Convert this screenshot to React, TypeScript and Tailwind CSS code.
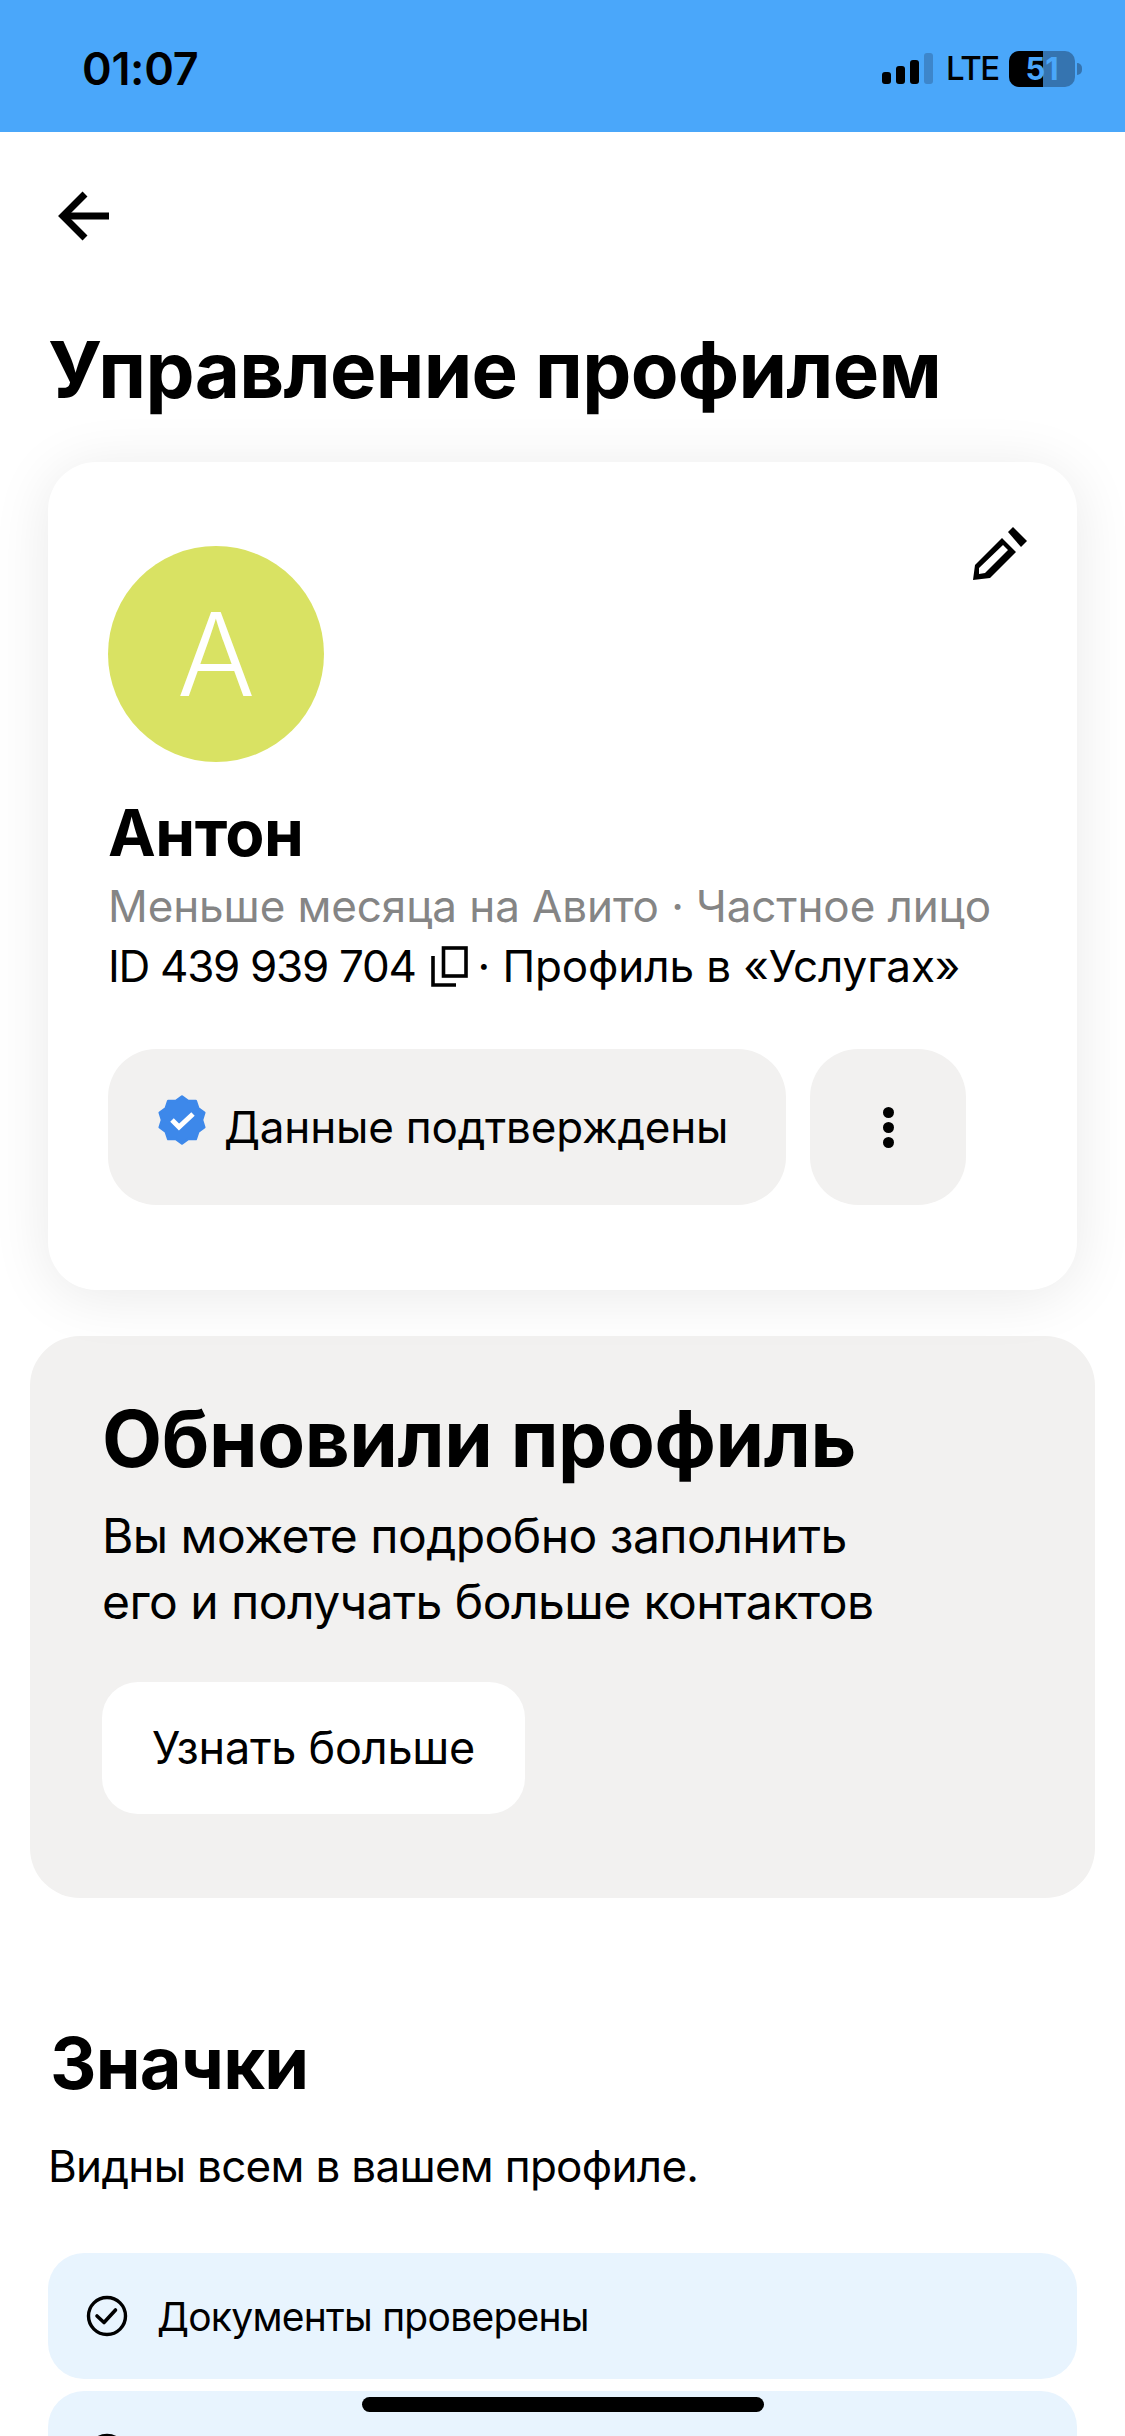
const Badge = ({ label }: { label?: string }) => (
  <div className="flex h-[126px] shrink-0 items-center rounded-[36px] bg-[#e8f4fe] pl-[38px]">
    <svg width="42" height="42" viewBox="0 0 42 42" fill="none" className="mr-[29px]">
      <circle cx="21" cy="21" r="18.5" stroke="black" strokeWidth="3.4" />
      <path d="M11 21 L18 27.5 L29.5 15" stroke="black" strokeWidth="3.6" strokeLinecap="round" strokeLinejoin="round" fill="none" />
    </svg>
    {label && <span className="text-[39px] leading-none tracking-[-0.75px]">{label}</span>}
  </div>
);

const StatusBar = () => (
  <div className="flex h-[132px] shrink-0 items-center justify-between bg-[#4aa7fa] pl-[82px] pr-[43px] pt-[5px]">
    <span className="text-[45px] font-semibold leading-none tracking-[-0.3px]">01:07</span>
    <div className="flex items-center">
      <div className="flex items-end gap-[5px]">
        <div className="h-[12px] w-[9px] rounded-[3px] bg-black" />
        <div className="h-[18px] w-[9px] rounded-[3px] bg-black" />
        <div className="h-[24px] w-[9px] rounded-[3px] bg-black" />
        <div className="h-[31px] w-[9px] rounded-[3px] bg-[#3d86cb]" />
      </div>
      <span className="ml-[13px] w-[50px] text-[33px] font-medium leading-none tracking-[-1.4px]">LTE</span>
      <div className="relative ml-[13px] flex h-[36px] w-[66px] items-center justify-center overflow-hidden rounded-[10px] bg-[#3574b0]">
        <div className="absolute inset-y-0 left-0 w-[34px] bg-black" />
        <span className="relative text-[31px] font-bold leading-none text-[#4aa7fa]">51</span>
      </div>
      <div className="ml-[2px] h-[12px] w-[5px] rounded-r-full bg-[#3574b0]" />
    </div>
  </div>
);

// 10-point rosette behind the check mark
const rosette = Array.from({ length: 20 }, (_, i) => {
  const r = i % 2 === 0 ? 23.5 : 20;
  const a = (i * 18 - 90) * (Math.PI / 180);
  return `${(26 + r * Math.cos(a)).toFixed(1)},${(26 + r * Math.sin(a)).toFixed(1)}`;
}).join(" ");

export default function App() {
  return (
    <div className="relative flex h-[2436px] w-[1125px] flex-col overflow-hidden bg-white font-['Inter',sans-serif] text-black">
      <StatusBar />
      <div className="shrink-0 pl-[55px] pt-[56px]">
        <svg width="58" height="56" viewBox="0 0 58 56" fill="none">
          <path d="M54 28 H8" stroke="black" strokeWidth="7" />
          <path d="M30 6 L8 28 L30 50" stroke="black" strokeWidth="7" />
        </svg>
      </div>

      <h1 className="mt-[81px] shrink-0 pl-[48px] text-[78px] font-bold leading-[90px] tracking-[-0.7px]">
        Управление профилем
      </h1>

      <section className="relative mx-[48px] mt-[47px] h-[828px] shrink-0 rounded-[48px] bg-white pl-[60px] pt-[84px] shadow-[0_6px_60px_rgba(0,0,0,0.09)]">
        <svg width="64" height="64" viewBox="0 0 64 64" fill="none" className="absolute right-[48px] top-[58px]">
          <path
            d="M10 45 L37 18 L51 32 L25 58 L8 60 Z M14 48 L14 54 L20 53 L43 30 L38 25 Z"
            fill="black"
            fillRule="evenodd"
          />
          <path d="M43 12 L48 7 L62 21 L56 27 Z" fill="black" />
        </svg>
        <div className="flex h-[216px] w-[216px] items-center justify-center rounded-full bg-[#d9e263] text-[116px] font-[350] leading-none text-white">
          А
        </div>
        <div className="mt-[35px] text-[64px] font-bold leading-[72px] tracking-[-0.5px]">Антон</div>
        <div className="mt-[7px] text-[44px] leading-[60px] tracking-[-0.1px] text-[#858585]">
          Меньше месяца на Авито · Частное лицо
        </div>
        <div className="flex items-center text-[44px] leading-[61px] tracking-[-0.1px]">
          <span className="tracking-[-1.3px]">ID 439 939 704</span>
          <svg width="38" height="42" viewBox="0 0 38 42" fill="none" className="ml-[14px] mr-[10px]">
            <rect x="13.5" y="2" width="22.5" height="28" stroke="black" strokeWidth="3.6" />
            <path d="M3 10 V39 H26" stroke="black" strokeWidth="3.6" />
          </svg>
          <span>· Профиль в «Услугах»</span>
        </div>
        <div className="mt-[52px] flex gap-[24px]">
          <div className="flex h-[156px] w-[678px] items-center rounded-[48px] bg-[#f2f1f0] pl-[48px]">
            <svg width="52" height="52" viewBox="0 0 52 52" className="mr-[16px] -mt-[14px]">
              <polygon points={rosette} fill="#3d88ea" stroke="#3d88ea" strokeWidth="2.5" strokeLinejoin="round" />
              <path d="M16 26 L23 33 L37 20" stroke="white" strokeWidth="5" fill="none" />
            </svg>
            <span className="text-[44px] leading-none tracking-[-0.2px]">Данные подтверждены</span>
          </div>
          <div className="flex h-[156px] w-[156px] flex-col items-center justify-center gap-[4px] rounded-[48px] bg-[#f2f1f0]">
            <div className="h-[11px] w-[11px] rounded-full bg-black" />
            <div className="h-[11px] w-[11px] rounded-full bg-black" />
            <div className="h-[11px] w-[11px] rounded-full bg-black" />
          </div>
        </div>
      </section>

      <section className="mx-[30px] mt-[46px] h-[562px] shrink-0 rounded-[50px] bg-[#f2f1f0] pl-[72px] pt-[58px]">
        <h2 className="text-[78px] font-bold leading-[90px] tracking-[-0.35px]">Обновили профиль</h2>
        <p className="mt-[19px] text-[48px] leading-[66px] tracking-[-0.55px]">
          Вы можете подробно заполнить
          <br />
          его и получать больше контактов
        </p>
        <div className="mt-[47px] flex h-[132px] w-[423px] items-center justify-center rounded-[36px] bg-white text-[45px] tracking-[-0.25px]">
          Узнать больше
        </div>
      </section>

      <h2 className="mt-[123px] shrink-0 pl-[50px] text-[72px] font-bold leading-[84px] tracking-[-0.8px]">Значки</h2>
      <p className="mt-[33px] shrink-0 pl-[48px] text-[44px] leading-[56px] tracking-[-0.7px]">Видны всем в вашем профиле.</p>

      <div className="mx-[48px] mt-[59px] flex shrink-0 flex-col gap-[12px]">
        <Badge label="Документы проверены" />
        <Badge />
      </div>

      <div className="absolute left-[362px] top-[2397px] h-[15px] w-[402px] rounded-full bg-black" />
    </div>
  );
}
